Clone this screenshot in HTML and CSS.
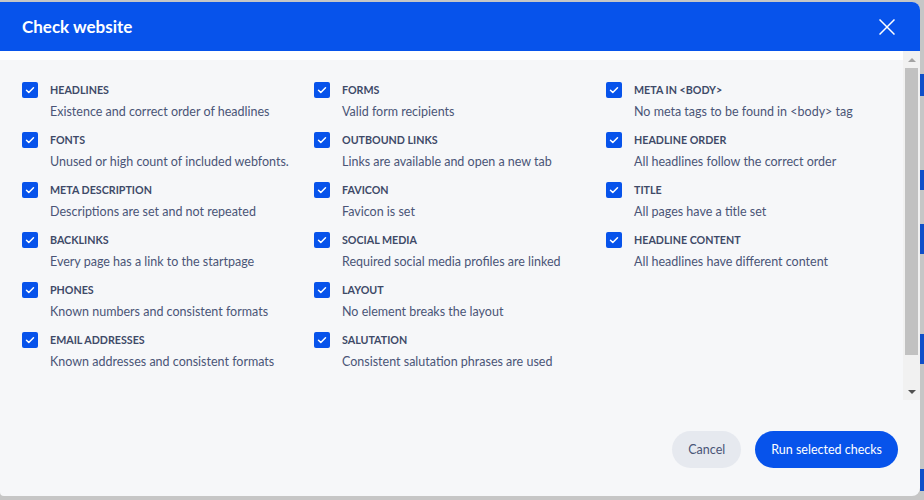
FILE: index.html
```html
<!DOCTYPE html>
<html lang="en">

<head>
    <meta charset="UTF-8">
    <meta name="viewport" content="width=device-width, initial-scale=1.0">
    <title>Check website</title>
    <link rel="stylesheet" href="styles.css">
</head>

<body>
    <div class="page">
        <div class="modal">
            <div class="modal-header">
                <h2>Check website</h2>
                <button class="close-btn" aria-label="Close">
                    <svg width="16" height="16" viewBox="0 0 16 16">
                        <path d="M0.5 0.5L15.5 15.5M15.5 0.5L0.5 15.5" stroke="#fff" stroke-width="1.5" fill="none" />
                    </svg>
                </button>
            </div>

            <div class="modal-body">
                <div class="scroll-content">
                    <div class="check-list">
                        <!-- row 1 -->
                        <label class="check">
                            <span class="box"><svg viewBox="0 0 16 16"><path d="M4.5 8.3l2.3 2.2 4.7-4.8" /></svg></span>
                            <span class="check-text">
                                <span class="check-title">Headlines</span>
                                <span class="check-desc">Existence and correct order of headlines</span>
                            </span>
                        </label>
                        <label class="check">
                            <span class="box"><svg viewBox="0 0 16 16"><path d="M4.5 8.3l2.3 2.2 4.7-4.8" /></svg></span>
                            <span class="check-text">
                                <span class="check-title">Forms</span>
                                <span class="check-desc">Valid form recipients</span>
                            </span>
                        </label>
                        <label class="check">
                            <span class="box"><svg viewBox="0 0 16 16"><path d="M4.5 8.3l2.3 2.2 4.7-4.8" /></svg></span>
                            <span class="check-text">
                                <span class="check-title">Meta in &lt;body&gt;</span>
                                <span class="check-desc">No meta tags to be found in &lt;body&gt; tag</span>
                            </span>
                        </label>

                        <!-- row 2 -->
                        <label class="check">
                            <span class="box"><svg viewBox="0 0 16 16"><path d="M4.5 8.3l2.3 2.2 4.7-4.8" /></svg></span>
                            <span class="check-text">
                                <span class="check-title">Fonts</span>
                                <span class="check-desc">Unused or high count of included webfonts.</span>
                            </span>
                        </label>
                        <label class="check">
                            <span class="box"><svg viewBox="0 0 16 16"><path d="M4.5 8.3l2.3 2.2 4.7-4.8" /></svg></span>
                            <span class="check-text">
                                <span class="check-title">Outbound links</span>
                                <span class="check-desc">Links are available and open a new tab</span>
                            </span>
                        </label>
                        <label class="check">
                            <span class="box"><svg viewBox="0 0 16 16"><path d="M4.5 8.3l2.3 2.2 4.7-4.8" /></svg></span>
                            <span class="check-text">
                                <span class="check-title">Headline order</span>
                                <span class="check-desc">All headlines follow the correct order</span>
                            </span>
                        </label>

                        <!-- row 3 -->
                        <label class="check">
                            <span class="box"><svg viewBox="0 0 16 16"><path d="M4.5 8.3l2.3 2.2 4.7-4.8" /></svg></span>
                            <span class="check-text">
                                <span class="check-title">Meta description</span>
                                <span class="check-desc">Descriptions are set and not repeated</span>
                            </span>
                        </label>
                        <label class="check">
                            <span class="box"><svg viewBox="0 0 16 16"><path d="M4.5 8.3l2.3 2.2 4.7-4.8" /></svg></span>
                            <span class="check-text">
                                <span class="check-title">Favicon</span>
                                <span class="check-desc">Favicon is set</span>
                            </span>
                        </label>
                        <label class="check">
                            <span class="box"><svg viewBox="0 0 16 16"><path d="M4.5 8.3l2.3 2.2 4.7-4.8" /></svg></span>
                            <span class="check-text">
                                <span class="check-title">Title</span>
                                <span class="check-desc">All pages have a title set</span>
                            </span>
                        </label>

                        <!-- row 4 -->
                        <label class="check">
                            <span class="box"><svg viewBox="0 0 16 16"><path d="M4.5 8.3l2.3 2.2 4.7-4.8" /></svg></span>
                            <span class="check-text">
                                <span class="check-title">Backlinks</span>
                                <span class="check-desc">Every page has a link to the startpage</span>
                            </span>
                        </label>
                        <label class="check">
                            <span class="box"><svg viewBox="0 0 16 16"><path d="M4.5 8.3l2.3 2.2 4.7-4.8" /></svg></span>
                            <span class="check-text">
                                <span class="check-title">Social media</span>
                                <span class="check-desc">Required social media profiles are linked</span>
                            </span>
                        </label>
                        <label class="check">
                            <span class="box"><svg viewBox="0 0 16 16"><path d="M4.5 8.3l2.3 2.2 4.7-4.8" /></svg></span>
                            <span class="check-text">
                                <span class="check-title">Headline content</span>
                                <span class="check-desc">All headlines have different content</span>
                            </span>
                        </label>

                        <!-- row 5 -->
                        <label class="check">
                            <span class="box"><svg viewBox="0 0 16 16"><path d="M4.5 8.3l2.3 2.2 4.7-4.8" /></svg></span>
                            <span class="check-text">
                                <span class="check-title">Phones</span>
                                <span class="check-desc">Known numbers and consistent formats</span>
                            </span>
                        </label>
                        <label class="check">
                            <span class="box"><svg viewBox="0 0 16 16"><path d="M4.5 8.3l2.3 2.2 4.7-4.8" /></svg></span>
                            <span class="check-text">
                                <span class="check-title">Layout</span>
                                <span class="check-desc">No element breaks the layout</span>
                            </span>
                        </label>
                        <div></div>

                        <!-- row 6 -->
                        <label class="check">
                            <span class="box"><svg viewBox="0 0 16 16"><path d="M4.5 8.3l2.3 2.2 4.7-4.8" /></svg></span>
                            <span class="check-text">
                                <span class="check-title">Email addresses</span>
                                <span class="check-desc">Known addresses and consistent formats</span>
                            </span>
                        </label>
                        <label class="check">
                            <span class="box"><svg viewBox="0 0 16 16"><path d="M4.5 8.3l2.3 2.2 4.7-4.8" /></svg></span>
                            <span class="check-text">
                                <span class="check-title">Salutation</span>
                                <span class="check-desc">Consistent salutation phrases are used</span>
                            </span>
                        </label>
                    </div>
                </div>

                <!-- classic scrollbar next to the list -->
                <div class="scrollbar">
                    <span class="scroll-btn"><span class="arrow-up"></span></span>
                    <span class="scroll-thumb"></span>
                    <span class="scroll-btn scroll-btn-down"><span class="arrow-down"></span></span>
                </div>
            </div>

            <div class="modal-footer">
                <button class="btn btn-cancel">Cancel</button>
                <button class="btn btn-primary">Run selected checks</button>
            </div>
        </div>

        <!-- strip of the page behind the dialog -->
        <div class="backdrop-edge">
            <span class="edge-block b1"></span>
            <span class="edge-block b2"></span>
            <span class="edge-block b3"></span>
            <span class="edge-block b4"></span>
            <span class="edge-block b5"></span>
        </div>
    </div>
</body>

</html>
```

FILE: styles.css
```css
body {
    font-family: Lato, "Noto Sans", sans-serif;
    background-color: #c6c6c6;
    margin: 0;
    padding: 0;
}

.page {
    display: flex;
    height: 500px;
    padding-top: 2px;
    box-sizing: border-box;
}

.modal {
    display: flex;
    flex-direction: column;
    width: 920px;
    height: 494px;
    background-color: #f6f7f9;
    border-radius: 0 8px 8px 4px;
    overflow: hidden;
}

.modal-header {
    display: flex;
    align-items: center;
    justify-content: space-between;
    height: 49px;
    padding: 0 25px 0 22px;
    background-color: #0753eb;
    flex-shrink: 0;
}

.modal-header h2 {
    margin: 0;
    color: #fff;
    font-size: 17px;
    font-weight: 700;
}

.close-btn {
    display: flex;
    padding: 0;
    border: none;
    background: none;
    cursor: pointer;
}

.modal-body {
    display: flex;
    height: 349px;
    flex-shrink: 0;
}

.scroll-content {
    flex: 1;
    overflow: hidden;
    background-color: #fff;
}

.check-list {
    display: grid;
    grid-template-columns: 292px 292px 1fr;
    row-gap: 12px;
    margin-top: 9px;
    padding: 22px 0 52px 22px;
    background-color: #f6f7f9;
}

.check {
    display: flex;
    gap: 12px;
    cursor: pointer;
}

.box {
    display: flex;
    width: 16px;
    height: 16px;
    border-radius: 2px;
    background-color: #0753eb;
    flex-shrink: 0;
}

.box svg {
    width: 16px;
    height: 16px;
    fill: none;
    stroke: #fff;
    stroke-width: 1.5;
    stroke-linecap: round;
    stroke-linejoin: round;
}

.check-text {
    display: flex;
    flex-direction: column;
    gap: 6px;
}

.check-title {
    font-size: 10.7px;
    font-weight: 700;
    line-height: 16px;
    text-transform: uppercase;
    color: #3e4a68;
}

.check-desc {
    font-size: 12.5px;
    line-height: 16px;
    color: #4a5577;
}

/* scrollbar */
.scrollbar {
    display: flex;
    flex-direction: column;
    width: 17px;
    background-color: #f1f1f1;
}

.scroll-btn {
    display: flex;
    align-items: center;
    justify-content: center;
    height: 17px;
}

.scroll-btn-down {
    margin-top: auto;
}

.arrow-up {
    border-left: 4px solid transparent;
    border-right: 4px solid transparent;
    border-bottom: 4px solid #a3a3a3;
}

.arrow-down {
    border-left: 4px solid transparent;
    border-right: 4px solid transparent;
    border-top: 4px solid #505050;
}

.scroll-thumb {
    height: 287px;
    margin: 0 2px;
    background-color: #c1c1c1;
}

.modal-footer {
    display: flex;
    justify-content: flex-end;
    gap: 14px;
    padding: 31px 22px 0 0;
}

.btn {
    height: 37px;
    border: none;
    border-radius: 19px;
    font-family: inherit;
    font-size: 12.5px;
    cursor: pointer;
}

.btn-cancel {
    padding: 0 16px;
    background-color: #e6e9ef;
    color: #4a5577;
}

.btn-primary {
    padding: 0 16px;
    background-color: #0753eb;
    color: #fff;
}

.backdrop-edge {
    display: flex;
    flex-direction: column;
    width: 4px;
    margin-top: -2px;
}

.edge-block {
    display: block;
    width: 4px;
    background-color: #0f4fc9;
}

.b1 { height: 22px; margin-top: 74px; }
.b2 { height: 20px; margin-top: 74px; }
.b3 { height: 30px; margin-top: 34px; }
.b4 { height: 30px; margin-top: 80px; }
.b5 { height: 22px; margin-top: 105px; }
```
